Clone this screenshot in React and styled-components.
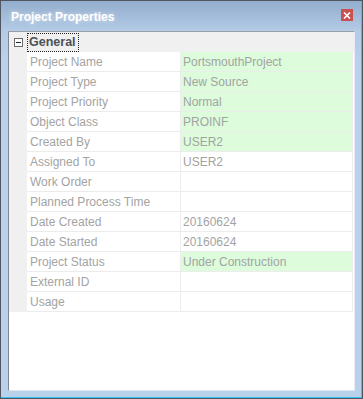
import React from "react";
import styled, { createGlobalStyle } from "styled-components";

const Global = createGlobalStyle`
  html, body { margin: 0; padding: 0; background: #fff; }
  body { font-family: "Liberation Sans", Arial, sans-serif; }
  * { box-sizing: border-box; }
`;

const Window = styled.div`
  width: 363px;
  height: 399px;
  border: 1px solid #4f5660;
  background: #b9d1ea;
`;

const Frame = styled.div`
  height: 100%;
  display: flex;
  flex-direction: column;
  border-right: 1px solid #38c4ec;
  border-bottom: 1px solid #38c4ec;
  background: linear-gradient(#93adcd 0px, #b3cbe6 30px, #b9d1ea 60px);
`;

const TitleBar = styled.div`
  height: 30px;
  display: flex;
  align-items: center;
  justify-content: space-between;
  padding: 2px 8px 0 10px;
`;

const Title = styled.span`
  font-family: "Liberation Sans", Arial, sans-serif;
  font-weight: 700;
  font-size: 12px;
  color: #fff;
  text-shadow: 0 0 4px rgba(255,255,255,0.6);
`;

const Close = styled.div`
  width: 12px;
  height: 12px;
  background: #c9504f;
  display: flex;
  align-items: center;
  justify-content: center;
  margin-top: -4px;
`;

const Panel = styled.div`
  margin: 0 6px 0 7px;
  height: 360px;
  background: #fff;
  border-left: 1px solid #7f8790;
  border-top: 1px solid #9aa0a8;
  border-right: 1px solid #e6ecf2;
  border-bottom: 1px solid #dfe6ee;
  display: flex;
  flex-direction: column;
`;

const Header = styled.div`
  height: 20px;
  background: #f0f0f0;
  display: flex;
  align-items: center;
  padding-right: 1px;
`;

const Toggle = styled.div`
  width: 18px;
  display: flex;
  justify-content: center;
  padding-left: 1px;
`;

const Box = styled.div`
  width: 9px;
  height: 9px;
  border: 1px solid #6b6b6b;
  background: #fff;
  display: flex;
  align-items: center;
  justify-content: center;
  &::after {
    content: "";
    width: 5px;
    height: 1px;
    background: #222;
  }
`;

const Category = styled.span`
  font-weight: 700;
  font-size: 12.5px;
  color: #4c5258;
  border: 1px dotted #222;
  height: 19px;
  line-height: 17px;
  padding: 0 2px 0 1px;
`;

const Grid = styled.div`
  display: grid;
  grid-template-columns: 18px 154px 1fr;
  margin-right: 1px;
`;

const Gutter = styled.div`
  background: #f0f0f0;
  height: 20px;
`;

const Cell = styled.div`
  height: 20px;
  border-bottom: 1px solid #ececec;
  border-right: 1px solid #ececec;
  background: ${p => (p.$green ? "#dcfcdc" : "#fff")};
  color: #a3a3a3;
  font-size: 12px;
  line-height: 20px;
  padding-left: ${p => (p.$value ? "2px" : "3px")};
  white-space: nowrap;
  overflow: hidden;
`;

const rows = [
  ["Project Name", "PortsmouthProject", true],
  ["Project Type", "New Source", true],
  ["Project Priority", "Normal", true],
  ["Object Class", "PROINF", true],
  ["Created By", "USER2", true],
  ["Assigned To", "USER2", false],
  ["Work Order", "", false],
  ["Planned Process Time", "", false],
  ["Date Created", "20160624", false],
  ["Date Started", "20160624", false],
  ["Project Status", "Under Construction", true],
  ["External ID", "", false],
  ["Usage", "", false],
];

export default function App() {
  return (
    <>
      <Global />
      <Window>
        <Frame>
          <TitleBar>
            <Title>Project Properties</Title>
            <Close>
              <svg width="8" height="7" viewBox="0 0 8 7">
                <path d="M1 0.5 L7 6.5 M7 0.5 L1 6.5" stroke="#fff" strokeWidth="1.6" />
              </svg>
            </Close>
          </TitleBar>
          <Panel>
            <Header>
              <Toggle><Box /></Toggle>
              <Category>General</Category>
            </Header>
            <Grid>
              {rows.map(([label, value, green]) => (
                <React.Fragment key={label}>
                  <Gutter />
                  <Cell>{label}</Cell>
                  <Cell $value $green={green}>{value}</Cell>
                </React.Fragment>
              ))}
            </Grid>
          </Panel>
        </Frame>
      </Window>
    </>
  );
}
